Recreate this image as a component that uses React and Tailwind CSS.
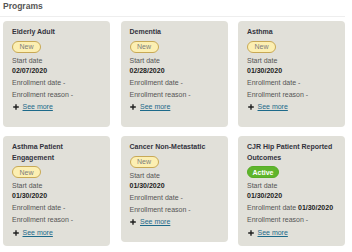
import React from "react";

const programs = [
  { title: "Elderly Adult", status: "New", start: "02/07/2020", enroll: null },
  { title: "Dementia", status: "New", start: "02/28/2020", enroll: null },
  { title: "Asthma", status: "New", start: "01/30/2020", enroll: null },
  { title: "Asthma Patient Engagement", status: "New", start: "01/30/2020", enroll: null },
  { title: "Cancer Non-Metastatic", status: "New", start: "01/30/2020", enroll: null },
  { title: "CJR Hip Patient Reported Outcomes", status: "Active", start: "01/30/2020", enroll: "01/30/2020" },
];

function Badge({ status }) {
  if (status === "Active") {
    return (
      <div className="mt-[3px] h-[12px] w-[32px] rounded-full bg-[#5fb52c] border border-[#57ad26] flex items-center justify-center text-[7px] font-bold text-white leading-none">
        Active
      </div>
    );
  }
  return (
    <div className="mt-[3px] h-[12px] w-[29px] rounded-full bg-[#fcefb2] border border-[#c8a956] flex items-center justify-center text-[7px] text-[#7d7d7d] leading-none">
      New
    </div>
  );
}

function Card({ p }) {
  return (
    <div className="rounded-[4px] bg-[#e1e0d9] min-h-[106px] pt-[6px] pb-[7px] px-[9px] flex flex-col items-start text-[7px] text-[#555]">
      <div className="font-bold leading-[10.6px] text-[#33333d]">{p.title}</div>
      <Badge status={p.status} />
      <div className="mt-[3px] leading-[10px]">Start date</div>
      <div className="leading-[10px] font-bold text-[#222]">{p.start}</div>
      <div className="mt-[1px] leading-[12px]">
        Enrollment date{" "}
        {p.enroll ? <span className="font-bold text-[#222]">{p.enroll}</span> : "-"}
      </div>
      <div className="leading-[12.5px]">Enrollment reason -</div>
      <div className="leading-[12.5px] h-[12.5px] flex items-center gap-[4px]">
        <svg width="6" height="6" viewBox="0 0 6 6" className="ml-[0.5px]">
          <path d="M3 0.2V5.8M0.2 3H5.8" stroke="#1f1f1f" strokeWidth="1.4" />
        </svg>
        <span className="underline text-[#1d6a8a]">See more</span>
      </div>
    </div>
  );
}

export default function App() {
  return (
    <div className="w-[352px] h-[252px] bg-white overflow-hidden font-['Liberation_Sans',Arial,sans-serif]">
      <div className="w-[345px]">
        <div className="h-[17px] pl-[3px] border-b border-[#eeeeee] text-[8.5px] font-bold text-[#555] leading-[12px]">
          Programs
        </div>
        <div className="pl-[3px] mt-[4px] grid grid-cols-3 gap-x-[10.5px] gap-y-[9px] items-start">
          {programs.map((p) => (
            <Card key={p.title} p={p} />
          ))}
        </div>
      </div>
    </div>
  );
}
